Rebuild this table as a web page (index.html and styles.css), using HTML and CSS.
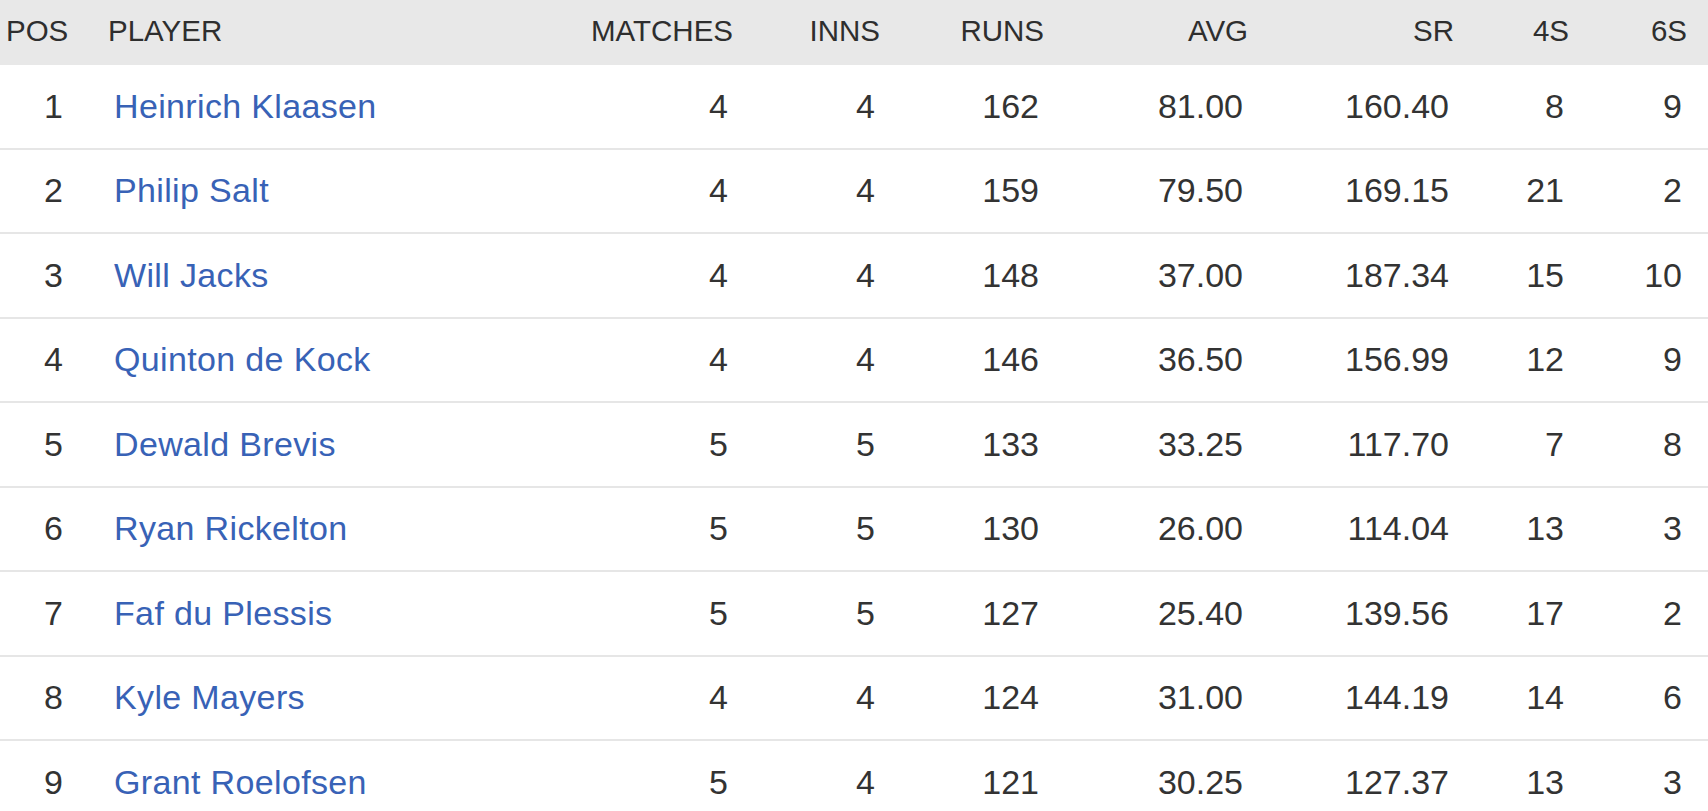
FILE: index.html
```html
<!DOCTYPE html>
<html lang="en">
<head>
<meta charset="utf-8">
<title>Most Runs</title>
<link rel="stylesheet" href="styles.css">
</head>
<body>
<div class="stats">
  <div class="row head">
    <div class="c pos"><span class="t">POS</span></div>
    <div class="c player"><span class="t">PLAYER</span></div>
    <div class="c num"><span class="t">MATCHES</span></div>
    <div class="c num"><span class="t">INNS</span></div>
    <div class="c num"><span class="t">RUNS</span></div>
    <div class="c num"><span class="t">AVG</span></div>
    <div class="c num"><span class="t">SR</span></div>
    <div class="c num"><span class="t">4S</span></div>
    <div class="c num"><span class="t">6S</span></div>
  </div>
  <div class="row">
    <div class="c pos"><span class="t">1</span></div>
    <div class="c player"><a class="t" href="#">Heinrich Klaasen</a></div>
    <div class="c num"><span class="t">4</span></div>
    <div class="c num"><span class="t">4</span></div>
    <div class="c num"><span class="t">162</span></div>
    <div class="c num"><span class="t">81.00</span></div>
    <div class="c num"><span class="t">160.40</span></div>
    <div class="c num"><span class="t">8</span></div>
    <div class="c num"><span class="t">9</span></div>
  </div>
  <div class="row">
    <div class="c pos"><span class="t">2</span></div>
    <div class="c player"><a class="t" href="#">Philip Salt</a></div>
    <div class="c num"><span class="t">4</span></div>
    <div class="c num"><span class="t">4</span></div>
    <div class="c num"><span class="t">159</span></div>
    <div class="c num"><span class="t">79.50</span></div>
    <div class="c num"><span class="t">169.15</span></div>
    <div class="c num"><span class="t">21</span></div>
    <div class="c num"><span class="t">2</span></div>
  </div>
  <div class="row">
    <div class="c pos"><span class="t">3</span></div>
    <div class="c player"><a class="t" href="#">Will Jacks</a></div>
    <div class="c num"><span class="t">4</span></div>
    <div class="c num"><span class="t">4</span></div>
    <div class="c num"><span class="t">148</span></div>
    <div class="c num"><span class="t">37.00</span></div>
    <div class="c num"><span class="t">187.34</span></div>
    <div class="c num"><span class="t">15</span></div>
    <div class="c num"><span class="t">10</span></div>
  </div>
  <div class="row">
    <div class="c pos"><span class="t">4</span></div>
    <div class="c player"><a class="t" href="#">Quinton de Kock</a></div>
    <div class="c num"><span class="t">4</span></div>
    <div class="c num"><span class="t">4</span></div>
    <div class="c num"><span class="t">146</span></div>
    <div class="c num"><span class="t">36.50</span></div>
    <div class="c num"><span class="t">156.99</span></div>
    <div class="c num"><span class="t">12</span></div>
    <div class="c num"><span class="t">9</span></div>
  </div>
  <div class="row">
    <div class="c pos"><span class="t">5</span></div>
    <div class="c player"><a class="t" href="#">Dewald Brevis</a></div>
    <div class="c num"><span class="t">5</span></div>
    <div class="c num"><span class="t">5</span></div>
    <div class="c num"><span class="t">133</span></div>
    <div class="c num"><span class="t">33.25</span></div>
    <div class="c num"><span class="t">117.70</span></div>
    <div class="c num"><span class="t">7</span></div>
    <div class="c num"><span class="t">8</span></div>
  </div>
  <div class="row">
    <div class="c pos"><span class="t">6</span></div>
    <div class="c player"><a class="t" href="#">Ryan Rickelton</a></div>
    <div class="c num"><span class="t">5</span></div>
    <div class="c num"><span class="t">5</span></div>
    <div class="c num"><span class="t">130</span></div>
    <div class="c num"><span class="t">26.00</span></div>
    <div class="c num"><span class="t">114.04</span></div>
    <div class="c num"><span class="t">13</span></div>
    <div class="c num"><span class="t">3</span></div>
  </div>
  <div class="row">
    <div class="c pos"><span class="t">7</span></div>
    <div class="c player"><a class="t" href="#">Faf du Plessis</a></div>
    <div class="c num"><span class="t">5</span></div>
    <div class="c num"><span class="t">5</span></div>
    <div class="c num"><span class="t">127</span></div>
    <div class="c num"><span class="t">25.40</span></div>
    <div class="c num"><span class="t">139.56</span></div>
    <div class="c num"><span class="t">17</span></div>
    <div class="c num"><span class="t">2</span></div>
  </div>
  <div class="row">
    <div class="c pos"><span class="t">8</span></div>
    <div class="c player"><a class="t" href="#">Kyle Mayers</a></div>
    <div class="c num"><span class="t">4</span></div>
    <div class="c num"><span class="t">4</span></div>
    <div class="c num"><span class="t">124</span></div>
    <div class="c num"><span class="t">31.00</span></div>
    <div class="c num"><span class="t">144.19</span></div>
    <div class="c num"><span class="t">14</span></div>
    <div class="c num"><span class="t">6</span></div>
  </div>
  <div class="row">
    <div class="c pos"><span class="t">9</span></div>
    <div class="c player"><a class="t" href="#">Grant Roelofsen</a></div>
    <div class="c num"><span class="t">5</span></div>
    <div class="c num"><span class="t">4</span></div>
    <div class="c num"><span class="t">121</span></div>
    <div class="c num"><span class="t">30.25</span></div>
    <div class="c num"><span class="t">127.37</span></div>
    <div class="c num"><span class="t">13</span></div>
    <div class="c num"><span class="t">3</span></div>
  </div>
</div>
</body>
</html>
```

FILE: styles.css
```css
html, body {
  margin: 0;
  padding: 0;
  background: #ffffff;
}

body {
  font-family: "Liberation Sans", Arial, Helvetica, sans-serif;
  color: #333333;
  overflow: hidden;
}

.stats {
  width: 1708px;
}

.row {
  display: grid;
  grid-template-columns: 100px 440px 198px 147px 164px 204px 206px 115px 134px;
  height: 82.5px;
  border-bottom: 2px solid #e6e6e6;
  align-items: center;
  font-size: 34px;
}

.row.head {
  box-sizing: border-box;
  height: 65px;
  padding-bottom: 4px;
  border-bottom: 0;
  background: #e8e8e8;
  font-size: 29.5px;
  color: #2e2e2e;
}

.c {
  white-space: nowrap;
}

.t {
  display: inline-block;
  line-height: 1;
}

.pos {
  text-align: right;
  padding-right: 37px;
}

.head .pos {
  text-align: left;
  padding-left: 6px;
  padding-right: 0;
}

.player {
  padding-left: 14px;
}

.head .player {
  padding-left: 8px;
}

.player a {
  color: #3862b6;
  text-decoration: none;
  letter-spacing: 0.35px;
}

.num {
  text-align: right;
  padding-right: 10px;
}

.num:last-child {
  padding-right: 26px;
}

.head .num {
  padding-right: 5px;
}

.head .num:last-child {
  padding-right: 21px;
}
```
